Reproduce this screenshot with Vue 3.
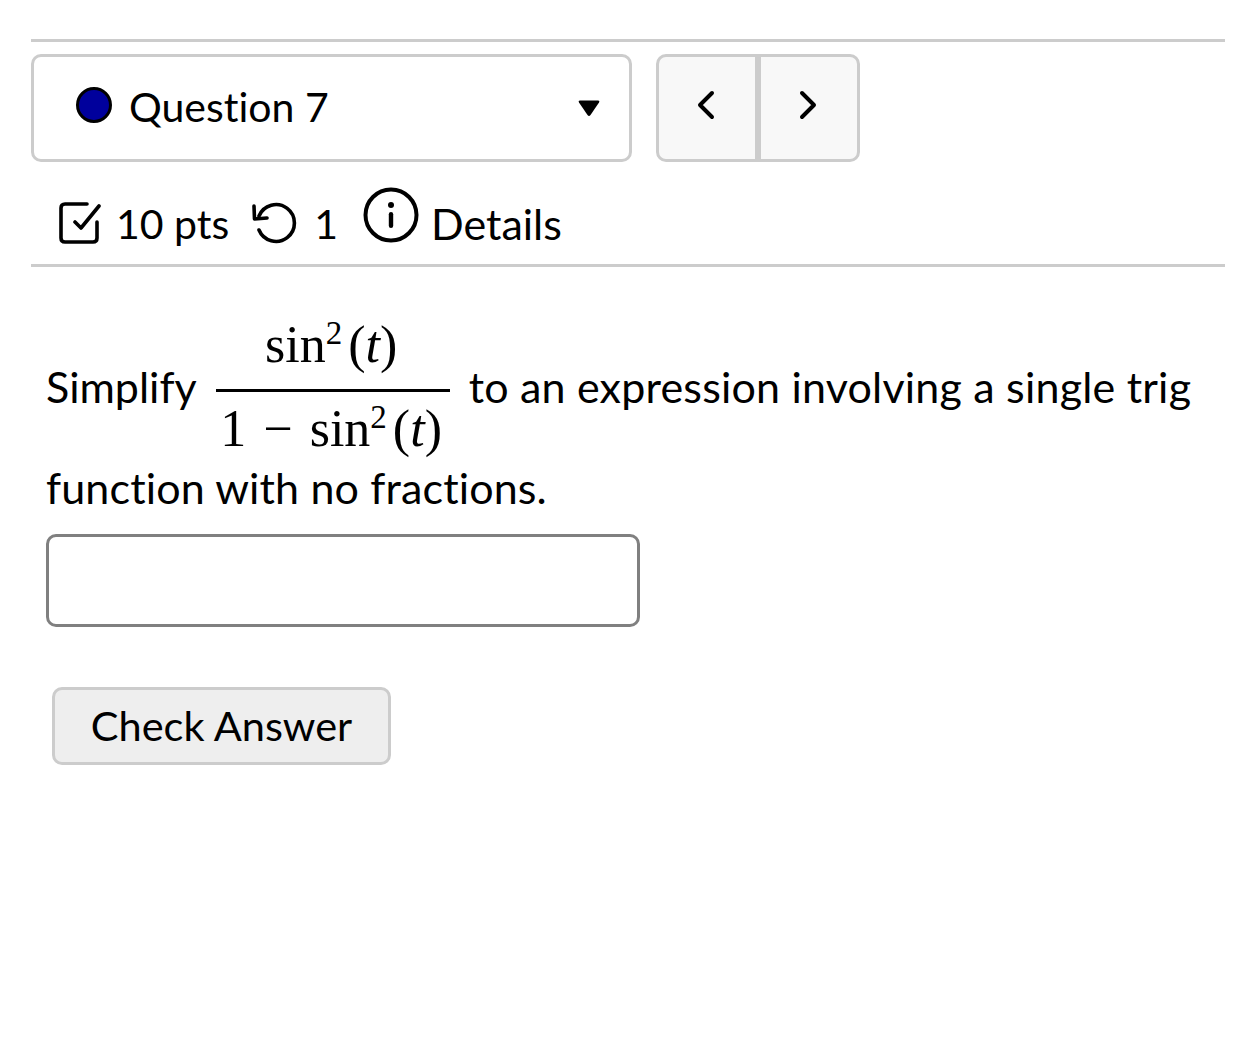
<script setup>
const statement = 'to an expression involving a single trig'
</script>

<template>
    <div class="page">
        <div class="rule"></div>
        <div class="selectRow">
            <div class="questionSelect">
                <span class="statusDot"></span>
                <span class="questionName">Question 7</span>
                <svg class="caret" width="24" height="20" viewBox="0 0 24 20">
                    <path d="M3 2.500 H21 Q23 2.500 22 4.500 L13.500 17 Q12 19 10.500 17 L2 4.500 Q1 2.500 3 2.500 Z" fill="#000" />
                </svg>
            </div>
            <div class="navGroup">
                <button class="navBtn navBtnLeft">
                    <svg width="22" height="32" viewBox="0 0 22 32"><path d="M17 4 L5 16 L17 28" fill="none" stroke="#000" stroke-width="4" stroke-linecap="round" stroke-linejoin="round" /></svg>
                </button>
                <button class="navBtn navBtnRight">
                    <svg width="22" height="32" viewBox="0 0 22 32"><path d="M5 4 L17 16 L5 28" fill="none" stroke="#000" stroke-width="4" stroke-linecap="round" stroke-linejoin="round" /></svg>
                </button>
            </div>
        </div>
        <div class="metaRow">
            <svg class="checkIcon" width="42" height="42" viewBox="0 0 42 42">
                <path d="M28 2 H6 Q2 2 2 6 V36 Q2 40 6 40 H34 Q38 40 38 36 V20" fill="none" stroke="#000" stroke-width="3.600" stroke-linecap="round" />
                <path d="M16 20 L22 26 L40 4" fill="none" stroke="#000" stroke-width="3.600" stroke-linecap="round" stroke-linejoin="round" />
            </svg>
            <span class="pts">10 pts</span>
            <svg class="retryIcon" width="46" height="42" viewBox="0 0 46 42">
                <path d="M8 14 A18.400 18.400 0 1 1 8 28" fill="none" stroke="#000" stroke-width="3.600" stroke-linecap="round" />
                <path d="M3 4 L3.500 17 L16 16" fill="none" stroke="#000" stroke-width="3.600" stroke-linecap="round" stroke-linejoin="round" />
            </svg>
            <span class="tries">1</span>
            <svg class="infoIcon" width="56" height="56" viewBox="0 0 56 56">
                <circle cx="28" cy="28" r="25.500" fill="none" stroke="#000" stroke-width="4" />
                <circle cx="28" cy="18" r="3" fill="#000" />
                <rect x="25.800" y="25" width="4.400" height="16" rx="2.200" fill="#000" />
            </svg>
            <span class="details">Details</span>
        </div>
        <div class="rule"></div>
        <div class="question">
            <p class="statement">
                <span class="statementLabel">Simplify</span>
                <span class="frac">
                    <span class="num">sin<sup>2</sup>(<i>t</i>)</span>
                    <span class="den">1<span class="minus">−</span>sin<sup>2</sup>(<i>t</i>)</span>
                </span>
                <span class="statementText">{{ statement }}</span>
            </p>
            <p class="statementEnd">function with no fractions.</p>
            <input class="answer" type="text" />
            <button class="checkBtn">Check Answer</button>
        </div>
    </div>
</template>

<style>
    html, body
    {
        background: #fff;
    }
</style>

<style scoped>
    .page
    {
        padding: 39px 32px 0 31px;
        font-family: 'Lato', 'Open Sans', Arial, sans-serif;
        font-size: 43px;
        font-variant-ligatures: none;
        color: #000;
    }

    .rule
    {
        height: 3px;
        background: #ccc;
    }

    .selectRow
    {
        display: flex;
        gap: 24px;
        margin-top: 12px;
    }

    .questionSelect
    {
        box-sizing: border-box;
        width: 601px;
        height: 108px;
        border: 3px solid #ccc;
        border-radius: 10px;
        display: flex;
        align-items: center;
        padding-left: 42px;
    }

    .statusDot
    {
        box-sizing: border-box;
        width: 36px;
        height: 36px;
        border-radius: 50%;
        background: #00009c;
        border: 3px solid #000;
        margin-top: -6px;
    }

    .questionName
    {
        margin-left: 17px;
        margin-top: -3px;
        font-size: 41px;
        line-height: 1;
    }

    .caret
    {
        margin-left: auto;
        margin-right: 28px;
    }

    .navGroup
    {
        box-sizing: border-box;
        width: 204px;
        height: 108px;
        border: 3px solid #ccc;
        border-radius: 10px;
        background: #f8f8f8;
        display: flex;
        overflow: hidden;
    }

    .navBtn
    {
        background: none;
        border: none;
        padding: 0 2px 4px 0;
    }

    .navBtnLeft
    {
        width: 96px;
    }

    .navBtnRight
    {
        width: 102px;
        border-left: 6px solid #ccc;
    }

    .metaRow
    {
        box-sizing: border-box;
        height: 102px;
        display: flex;
        align-items: center;
        padding-left: 28px;
        padding-top: 20px;
    }

    .pts
    {
        margin-left: 15px;
        font-size: 41px;
    }

    .retryIcon
    {
        margin-left: 22px;
    }

    .tries
    {
        margin-left: 17px;
        font-size: 41px;
    }

    .infoIcon
    {
        margin-left: 25px;
        margin-top: -16px;
    }

    .details
    {
        margin-left: 12px;
    }

    .question
    {
        padding-left: 15px;
    }

    .statement
    {
        margin: 52px 0 0;
        display: flex;
        align-items: center;
        white-space: nowrap;
    }

    .statementLabel
    {
        padding-bottom: 2px;
    }

    .statementText
    {
        letter-spacing: 0.200px;
        padding-bottom: 2px;
    }

    .frac
    {
        display: inline-flex;
        flex-direction: column;
        align-items: center;
        width: 234px;
        margin: 0 19px;
        font-family: 'Liberation Serif', 'Times New Roman', serif;
        font-size: 52px;
        line-height: 1;
    }

    .frac sup
    {
        font-size: 33px;
        line-height: 0;
        margin-right: 6px;
    }

    .minus
    {
        margin: 0 17px;
    }

    .num
    {
        box-sizing: border-box;
        padding: 0 3px 18px 0;
        border-bottom: 3px solid #000;
        width: 100%;
        text-align: center;
    }

    .den
    {
        padding: 11px 3px 0 0;
    }

    .statementEnd
    {
        margin: 7px 0 0;
        line-height: 52px;
        letter-spacing: 0.150px;
    }

    .answer
    {
        display: block;
        box-sizing: border-box;
        width: 594px;
        height: 93px;
        margin-top: 20px;
        border: 3px solid #808080;
        border-radius: 10px;
        background: #fff;
    }

    .checkBtn
    {
        display: block;
        box-sizing: border-box;
        width: 339px;
        height: 78px;
        margin: 60px 0 0 6px;
        border: 3px solid #ccc;
        border-radius: 10px;
        background: #eee;
        font: inherit;
        font-size: 41.500px;
        color: #000;
        padding: 0 0 2px;
    }
</style>
